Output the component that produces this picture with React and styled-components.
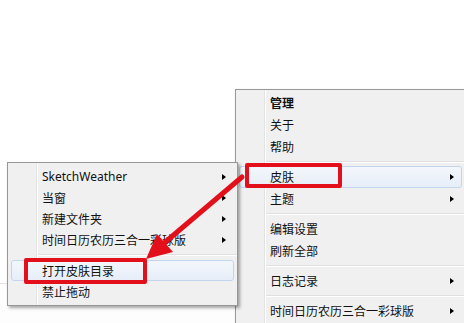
import styled, { createGlobalStyle } from "styled-components";

const Global = createGlobalStyle`
  html, body { margin: 0; padding: 0; background: #fff; }
  body { font-family: "Noto Sans", "Noto Sans CJK SC", sans-serif; }
`;

const Desktop = styled.div`
  position: relative;
  width: 464px;
  height: 323px;
  overflow: hidden;
  background: #fff;
`;

// a window sitting behind the menus, only its edges show
const BackWindow = styled.div`
  position: absolute;
  left: -1px;
  top: 283px;
  width: 237px;
  height: 60px;
  border: 1px solid #e2e2e2;
  background: #fdfdfd;
`;

const Menu = styled.div`
  position: absolute;
  left: ${(p) => p.x}px;
  top: ${(p) => p.y}px;
  width: 229px;
  padding: ${(p) => p.pad}px 0 ${(p) => p.tail}px;
  display: flex;
  flex-direction: column;
  border: 1px solid #979797;
  background: linear-gradient(to right, #f0f0f0 28px, #e2e3e3 28px 29px, #fff 29px 30px, #f0f0f0 30px);
  box-shadow: 2px 2px 3px rgba(0, 0, 0, 0.35);
  font-size: 12px;
  color: #111;
`;

const Item = styled.div`
  height: ${(p) => p.h - 2}px;
  margin: 0 3px;
  padding: 0 7px 0 30px;
  display: flex;
  align-items: center;
  justify-content: space-between;
  border: 1px solid ${(p) => (p.active ? "#c2d5ef" : "transparent")};
  border-radius: 3px;
  background: ${(p) => (p.active ? "linear-gradient(#f3f7fc, #e7eef8)" : "transparent")};
  font-weight: ${(p) => (p.bold ? 700 : 400)};
  white-space: nowrap;
`;

const Arrow = styled.span`
  width: 0;
  height: 0;
  border-left: 4px solid #000;
  border-top: 3.5px solid transparent;
  border-bottom: 3.5px solid transparent;
`;

const Separator = styled.div`
  height: ${(p) => p.h}px;
  margin-left: 30px;
  display: flex;
  flex-direction: column;
  justify-content: center;
  &::before {
    content: "";
    height: 1px;
    background: #e0e0e0;
  }
  &::after {
    content: "";
    height: 1px;
    background: #fff;
  }
`;

const RedBox = styled.div`
  position: absolute;
  left: ${(p) => p.x}px;
  top: ${(p) => p.y}px;
  width: ${(p) => p.w}px;
  height: ${(p) => p.h}px;
  box-sizing: border-box;
  border: 4px solid #e3101c;
  border-radius: 2px;
`;

const Overlay = styled.svg`
  position: absolute;
  left: 0;
  top: 0;
`;

const rightMenu = [
  { label: "管理", bold: true },
  { label: "关于" },
  { label: "帮助" },
  { sep: true },
  { label: "皮肤", sub: true, active: true },
  { label: "主题", sub: true },
  { sep: true },
  { label: "编辑设置" },
  { label: "刷新全部" },
  { sep: true },
  { label: "日志记录", sub: true },
  { sep: true },
  { label: "时间日历农历三合一彩球版", sub: true },
];

const leftMenu = [
  { label: "SketchWeather", sub: true },
  { label: "当窗", sub: true },
  { label: "新建文件夹", sub: true },
  { label: "时间日历农历三合一彩球版", sub: true },
  { sep: true },
  { label: "打开皮肤目录", active: true },
  { label: "禁止拖动" },
];

function ContextMenu({ items, x, y, pad, tail, rowH, sepH }) {
  return (
    <Menu x={x} y={y} pad={pad} tail={tail}>
      {items.map((it, i) =>
        it.sep ? (
          <Separator key={i} h={sepH} />
        ) : (
          <Item key={i} h={rowH} bold={it.bold} active={it.active}>
            <span>{it.label}</span>
            {it.sub && <Arrow />}
          </Item>
        )
      )}
    </Menu>
  );
}

export default function App() {
  return (
    <Desktop>
      <Global />
      <BackWindow />
      <ContextMenu items={rightMenu} x={235} y={89} pad={2} tail={30} rowH={22} sepH={8} />
      <ContextMenu items={leftMenu} x={7} y={162} pad={3} tail={3} rowH={21} sepH={10} />
      <RedBox x={245} y={163} w={97} h={25} />
      <RedBox x={24} y={258} w={123} h={26} />
      <Overlay width="464" height="323">
        <line x1="242" y1="177" x2="163" y2="244" stroke="#e3101c" strokeWidth="5" strokeLinecap="round" />
        <polygon points="146,259 157,234 173,252" fill="#e3101c" />
      </Overlay>
    </Desktop>
  );
}
